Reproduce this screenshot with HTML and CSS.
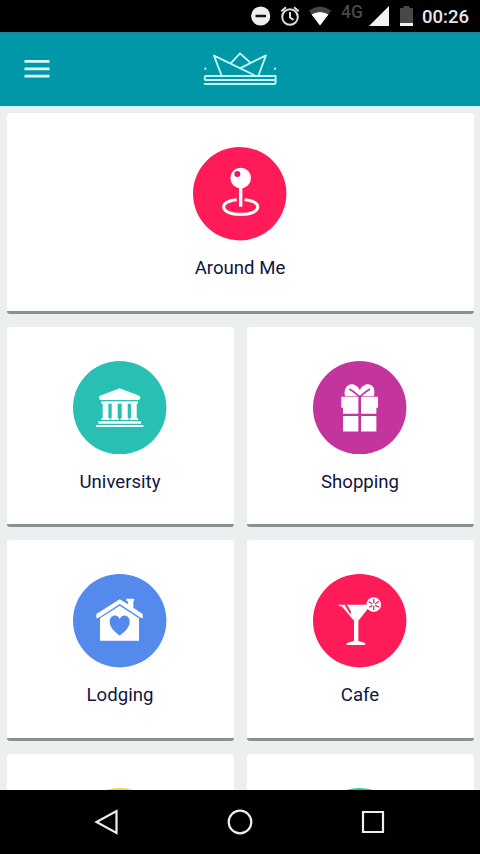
FILE: index.html
```html
<!DOCTYPE html>
<html lang="en">
<head>
<meta charset="utf-8">
<title>Places</title>
<link rel="stylesheet" href="styles.css">
</head>
<body>
<div class="screen">
  <div class="status">
    <svg class="status-left" viewBox="0 0 100 32">
      <circle cx="20.700" cy="16" r="9.600" fill="#eee"/>
      <path d="M15.500 16h10.500" stroke="#111" stroke-width="2.500"/>
      <g fill="none" stroke="#ddd" stroke-width="2">
        <circle cx="50" cy="17" r="7.800"/>
        <path d="M50 12v5.500l3.500 2.300M41.300 11.300l4.700-4M58.700 11.300l-4.700-4"/>
      </g>
      <path d="M69 10.700Q80 3 91 10.700L80 25.500z" fill="#444"/>
      <path d="M71.500 14.500Q80 9.500 88.500 14.500L80 25.500z" fill="#fff"/>
    </svg>
    <span class="network">4G</span>
    <svg class="status-right" viewBox="0 0 48 32">
      <path d="M21 6V26H1z" fill="#f2f2f2"/>
      <path d="M32 8h3.500V6h6v2H45v15H32z" fill="#484848"/>
      <path d="M32 23h13v3H32z" fill="#f2f2f2"/>
    </svg>
    <span class="clock">00:26</span>
  </div>

  <header class="bar">
    <svg class="menu" viewBox="0 0 26 20"><path d="M.5 2.300h25M.5 9.800h25M.5 17.200h25" stroke="#d9ffff" stroke-width="2.700"/></svg>
    <svg class="logo" viewBox="0 0 300 180">
      <g fill="none" stroke="#c4fbff" stroke-width="5.500" stroke-linejoin="round" stroke-linecap="round">
        <path d="M94 105L72 47L192 105M122 70L150 40L182 69M150 85L228 46L206 105"/>
        <path d="M256 108H48Q44 108 44 114T48 120H252Q257 120 257 126T252 132H44M257 108V124"/>
      </g>
      <g fill="#a5eef5"><circle cx="46" cy="86" r="3.500"/><circle cx="255" cy="86" r="3.500"/></g>
    </svg>
  </header>

  <main class="grid">
    <section class="card wide">
      <svg class="icon" viewBox="-140 -140 280 280">
        <circle r="140" fill="#ff1b58"/>
        <circle cx="3" cy="-47" r="31" fill="#fff"/>
        <circle cx="-7" cy="-59" r="9" fill="#e51c55"/>
        <path d="M3-20V39" stroke="#fff" stroke-width="10"/>
        <path d="M-9 18C-64 22-62 62 3 62S70 22 15 18" fill="none" stroke="#fff" stroke-width="9"/>
      </svg>
      <span class="label">Around Me</span>
    </section>

    <section class="card">
      <svg class="icon" viewBox="-140 -140 280 280">
        <circle r="140" fill="#27c0b3"/>
        <g fill="#fff">
          <path d="M0-58L59-36Q62-34 62-30T57-23H-57Q-62-23-62-30T-59-36z"/>
          <path d="M-55-19H55V-12H-55z"/>
          <path d="M-51-14h17V34h-17zM-24-14h18V34h-18zM6-14h18V34H6zM34-14h17V34H34z"/>
          <path d="M-55 31h25v6h-25zM-27 31h24v6h-24zM3 31h24v6H3zM30 31h25v6H30z"/>
          <path d="M-64 41H64V48H-64zM-71 52H71V58H-71z"/>
        </g>
      </svg>
      <span class="label">University</span>
    </section>

    <section class="card">
      <svg class="icon" viewBox="-140 -140 280 280">
        <circle r="140" fill="#c3349d"/>
        <g fill="#fff">
          <path d="M-55-33H-4V18H-50V0H-55zM4-33H55V0H50V18H4zM-50 25H-4V71H-50zM4 25H50V71H4z"/>
          <path d="M-4-34H-44C-50-58-34-76-16-69Q-5-65 0-53Q6-65 17-69C36-76 50-57 42-34H4L0-38z"/>
        </g>
        <path d="M-31-56Q-20-50-3-35M31-56Q20-50 3-35" fill="none" stroke="#c3349d" stroke-width="5"/>
      </svg>
      <span class="label">Shopping</span>
    </section>

    <section class="card">
      <svg class="icon" viewBox="-140 -140 280 280">
        <circle r="140" fill="#548aec"/>
        <g fill="#fff">
          <path d="M0-64L25-49V-58H20V-66H43V-58H41V-39L69-20V-7L63-9L0-50L-63-9L-70-7V-20z"/>
          <path d="M0-45L58-7V60H-59V-7z"/>
        </g>
        <path d="M0 45C-10 36-30 23-30 3C-30-18-7-22 0-5C7-22 30-18 30 3C30 23 10 36 0 45z" fill="#548aec"/>
      </svg>
      <span class="label">Lodging</span>
    </section>

    <section class="card">
      <svg class="icon" viewBox="-140 -140 280 280">
        <circle r="140" fill="#ff1b58"/>
        <g fill="#fff">
          <circle cx="42" cy="-48" r="22"/>
          <path d="M-64-48H34L-4 0V61L14 66Q22 72 12 73H-35Q-45 71-36 66L-17 61V0L-52-41L-62-45z"/>
        </g>
        <path d="M-44-47L-28-21V-29L-39-48z" fill="#ff1b58" stroke="#ff1b58" stroke-width="2"/>
        <path d="M42-52V-65M46-50L57-58M46-46L58-41M42-44V-32M38-50L27-57M38-46L29-40" stroke="#df3968" stroke-width="4"/>
      </svg>
      <span class="label">Cafe</span>
    </section>

    <section class="card">
      <svg class="icon" viewBox="-140 -140 280 280"><circle r="140" fill="#edd431"/></svg>
    </section>
    <section class="card">
      <svg class="icon" viewBox="-140 -140 280 280"><circle r="140" fill="#1fd68f"/></svg>
    </section>
  </main>

  <nav class="nav">
    <svg viewBox="0 0 28 28"><path d="M23.500 3V25L3.500 14z"/></svg>
    <svg viewBox="0 0 28 28"><circle cx="14" cy="14" r="11.300"/></svg>
    <svg viewBox="0 0 28 28"><path d="M4 4H24V24H4z"/></svg>
  </nav>
</div>
</body>
</html>
```
FILE: styles.css
```css
* { box-sizing: border-box; }

body {
  margin: 0;
  font-family: Roboto, "Liberation Sans", sans-serif;
}

svg { display: block; flex: none; }

.screen {
  display: flex;
  flex-direction: column;
  width: 480px;
  height: 854px;
  overflow: hidden;
  background: #ebeff0;
}

.status {
  display: flex;
  flex: none;
  height: 32px;
  padding-left: 240px;
  background: #000;
}

.status-left { width: 100px; height: 32px; }
.status-right { width: 48px; height: 32px; }

.network {
  width: 28px;
  padding-left: 1px;
  color: #484848;
  font-size: 17.500px;
  font-weight: 500;
  line-height: 24px;
}

.clock {
  padding-left: 6px;
  color: #e8e8e8;
  font-size: 18.500px;
  font-weight: 500;
  line-height: 34px;
}

.bar {
  display: grid;
  grid-template-columns: 1fr 100px 1fr;
  flex: none;
  align-items: center;
  height: 75px;
  padding: 0 24px;
  background: #0097a9;
  border-top: 1px solid #27808d;
  border-bottom: 1px solid #d5f3f6;
}

.menu { width: 26px; height: 20px; margin-bottom: 2px; }
.logo { width: 100px; height: 60px; }

.grid {
  display: grid;
  flex: 1;
  grid-template-columns: 1fr 1fr;
  grid-auto-rows: 200.500px;
  gap: 13px;
  min-height: 0;
  padding: 6.300px 6.500px 0;
  overflow: hidden;
}

.card {
  display: flex;
  flex-direction: column;
  align-items: center;
  padding-top: 34px;
  background: #fff;
  border-bottom: 3px solid #8b9192;
  border-radius: 3px;
}

.wide { grid-column: 1 / -1; }

.icon { width: 93.400px; height: 93.400px; }

.label {
  margin-top: 16.600px;
  color: #10163f;
  font-size: 18.600px;
  line-height: 22px;
}

.nav {
  display: flex;
  flex: none;
  justify-content: space-between;
  align-items: center;
  height: 64px;
  padding: 0 93px;
  background: #000;
}

.nav svg {
  width: 28px;
  height: 28px;
  fill: none;
  stroke: #eee;
  stroke-width: 2.200;
}
```
